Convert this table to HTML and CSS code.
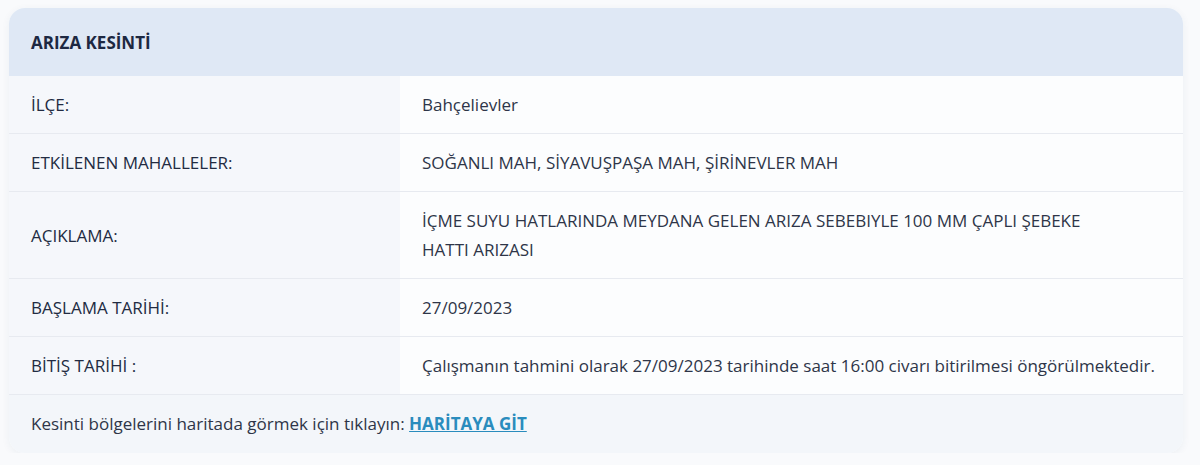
FILE: index.html
```html
<!DOCTYPE html>
<html lang="tr">
  <head>
    <meta charset="UTF-8" />
    <meta name="viewport" content="width=device-width, initial-scale=1.0" />
    <title>Arıza Kesinti</title>
    <link rel="stylesheet" href="styles.css">
  </head>
  <body>
    <div class="card">
      <div class="head">ARIZA KESİNTİ</div>
      <div class="row">
        <div class="label">İLÇE:</div>
        <div class="value">Bahçelievler</div>
      </div>
      <div class="row">
        <div class="label">ETKİLENEN MAHALLELER:</div>
        <div class="value">SOĞANLI MAH, SİYAVUŞPAŞA MAH, ŞİRİNEVLER MAH</div>
      </div>
      <div class="row">
        <div class="label">AÇIKLAMA:</div>
        <div class="value">İÇME SUYU HATLARINDA MEYDANA GELEN ARIZA SEBEBIYLE 100 MM ÇAPLI ŞEBEKE<br />HATTI ARIZASI</div>
      </div>
      <div class="row">
        <div class="label">BAŞLAMA TARİHİ:</div>
        <div class="value">27/09/2023</div>
      </div>
      <div class="row">
        <div class="label">BİTİŞ TARİHİ :</div>
        <div class="value">Çalışmanın tahmini olarak 27/09/2023 tarihinde saat 16:00 civarı bitirilmesi öngörülmektedir.</div>
      </div>
      <div class="foot">
        Kesinti bölgelerini haritada görmek için tıklayın: <a href="#">HARİTAYA GİT</a>
      </div>
    </div>
  </body>
</html>
```

FILE: styles.css
```css
* {
  margin: 0;
  padding: 0;
  box-sizing: border-box;
}
body {
  background-color: #f9fafc;
  font-family: "Open Sans", "Noto Sans", sans-serif;
  font-size: 17px;
  color: #2e3548;
}
.card {
  margin: 8px 17px 0 9px;
  border-radius: 16px;
  overflow: hidden;
  background: #fcfdfe;
  box-shadow: 0 2px 8px rgba(40, 60, 100, 0.06);
}
.head {
  height: 68px;
  display: flex;
  align-items: center;
  padding: 0 22px;
  background: #dfe8f5;
  font-weight: 700;
  color: #1d2842;
}
.row {
  display: grid;
  grid-template-columns: 391px 1fr;
  border-bottom: 1px solid #e7eaf0;
}
.label {
  display: flex;
  align-items: center;
  padding: 14px 22px;
  line-height: 29px;
  background: #f5f7fb;
  color: #222b42;
  font-weight: 500;
}
.value {
  padding: 14px 22px;
  line-height: 29px;
  background: #fcfdfe;
}
.foot {
  padding: 14px 22px 15px;
  line-height: 29px;
  background: #f3f6fa;
}
.foot a {
  color: #2a8cbd;
  font-weight: 700;
  text-decoration: underline;
}
```
